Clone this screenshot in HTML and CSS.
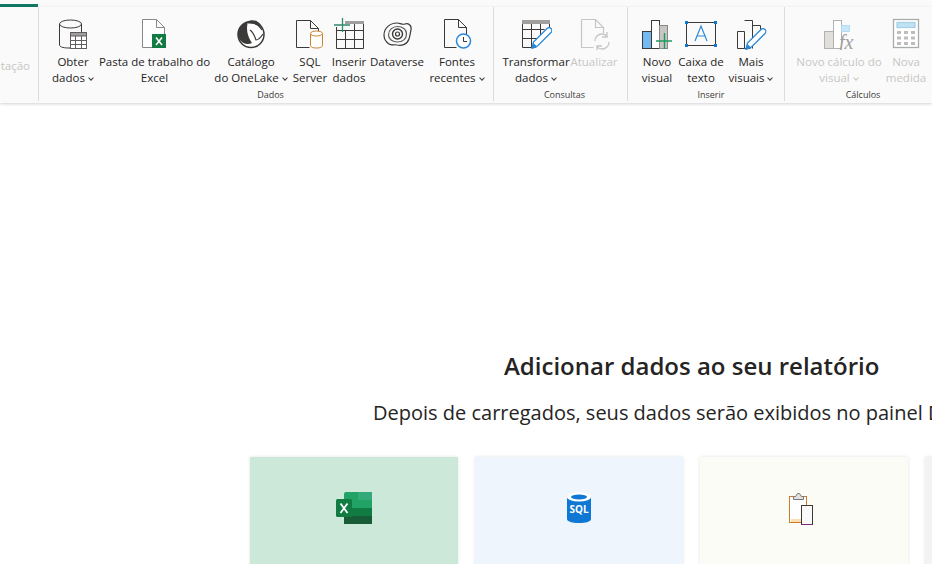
FILE: index.html
```html
<!DOCTYPE html>
<html>
<head>
    <meta charset="utf-8">
    <meta name="viewport" content="width=device-width, initial-scale=1">
    <title>Relatório</title>
    <link rel="stylesheet" href="styles.css">
</head>
<body>
    <div class="tabstrip"><span class="activetab"></span></div>
    <div class="ribbon">
        <div class="group g-cut">
            <div class="items"><div class="btn w-cut dim"><span class="ico"></span><span class="lbl">&nbsp;<br></span><span class="lbl2">tação</span></div></div>
        </div>
        <div class="group g-dados">
            <div class="items">
                <div class="btn w-obter">
                    <svg class="ico" width="32" height="32" viewBox="0 0 32 32" fill="none" stroke="#3b3a39" stroke-width="1"><path d="M2.5 6v21c0 1.5 2.500 3 9.500 3h3M24.500 6v8"/><ellipse cx="13.500" cy="6" rx="11" ry="4"/><rect x="13.500" y="14.500" width="16" height="16" fill="#fff" stroke="#605e5c"/><rect x="13.500" y="14.500" width="16" height="3.500" fill="#a19f9d" stroke="#605e5c"/><path d="M13.500 22.500h16M13.500 26.500h16M18.500 18v12M24.500 18v12" stroke="#605e5c"/></svg>
                    <span class="lbl">Obter<br>dados<i class="chev"></i></span>
                </div>
                <div class="btn w-pasta">
                    <svg class="ico" width="32" height="32" viewBox="0 0 32 32" fill="none" stroke="#8a8886"><path d="M3.500 1.500h14l8 8v20h-22zM17.500 1.500v8h8" fill="#fff"/><rect x="13" y="16" width="14" height="14" fill="#107c41" stroke="none"/><path d="M17 19.500l6 7.500M23 19.500l-6 7.500" stroke="#fff" stroke-width="1.600"/></svg>
                    <span class="lbl">Pasta de trabalho do<br>Excel</span>
                </div>
                <div class="btn w-cat">
                    <svg class="ico" width="32" height="32" viewBox="0 0 32 32" fill="none"><circle cx="16" cy="16.500" r="13" stroke="#3b3a39" stroke-width="1.500" fill="#fff"/><path d="M3 16c0-7 5-11 10-12-2 6-1 14 4 21-7 3-14-2-14-9z" fill="#3b3a39"/><path d="M11 5c2-3 8-4 12-1 2 1 3 3 4 5-5-3-11-4-16-4z" fill="#3b3a39"/><path d="M13 5c6-1 11 2 14 7M15 12c3 2 5 7 6 10 2 0 5-3 7-6" stroke="#3b3a39" stroke-width="1.200"/></svg>
                    <span class="lbl">Catálogo<br>do OneLake<i class="chev"></i></span>
                </div>
                <div class="btn w-sql">
                    <svg class="ico" width="32" height="32" viewBox="0 0 32 32" fill="none"><path d="M2.500 2.500h14l8 8v6M16.500 2.500v8h8M2.500 2.500v27h13" stroke="#3b3a39"/><path d="M16.500 16v11c0 2 2 3 6 3s6-1 6-3V16z" fill="#fff" stroke="#ca8233"/><ellipse cx="22.500" cy="15.500" rx="6" ry="2.500" fill="#fff" stroke="#ca8233"/></svg>
                    <span class="lbl">SQL<br>Server</span>
                </div>
                <div class="btn w-ins">
                    <svg class="ico" width="32" height="32" viewBox="0 0 32 32" fill="none" stroke="#3b3a39"><path d="M3.500 9v21.500h27v-27H14M3.500 12.500h27M3.500 21.500h27M12.500 12v18.500M21.500 3.500v27"/><rect x="12" y="3" width="19" height="3" fill="#a19f9d" stroke="none"/><path d="M9.500 0v14M1 7h16" stroke="#2e8b6a" stroke-width="1.300"/></svg>
                    <span class="lbl">Inserir<br>dados</span>
                </div>
                <div class="btn w-dv">
                    <svg class="ico" width="32" height="32" viewBox="0 0 32 32" fill="none" stroke="#3b3a39" stroke-width="1.200"><path d="M3 17c0-7 6-12 13-12 3 0 5 2 8 1 3-1 7 1 6 6-1 4-1 6-2 9-2 6-8 7-12 6-3-1-5 1-8-1-3-2-5-5-5-9z"/><path d="M7.500 17c0-5 4-8.500 9-8.500s9 3 9 7.500c0 5-4 8-9 8-5 0-9-3-9-7z" stroke="#605e5c"/><circle cx="16.500" cy="16" r="5" stroke-width="1.400"/><circle cx="16.500" cy="16" r="2"/></svg>
                    <span class="lbl">Dataverse<br>&nbsp;</span>
                </div>
                <div class="btn w-font">
                    <svg class="ico" width="32" height="32" viewBox="0 0 32 32" fill="none"><path d="M3.500 1.500h14l8 8v9M17.500 1.500v8h8M3.500 1.500v28h12" stroke="#3b3a39"/><circle cx="22.500" cy="23" r="7" fill="#fff" stroke="#2b88d8" stroke-width="1.500"/><path d="M22.500 19v4.500h3.500" stroke="#3b3a39"/></svg>
                    <span class="lbl">Fontes<br>recentes<i class="chev"></i></span>
                </div>
            </div>
            <div class="gname">Dados</div>
        </div>
        <div class="group g-cons">
            <div class="items">
                <div class="btn w-trans">
                    <svg class="ico" width="32" height="32" viewBox="0 0 32 32" fill="none" stroke="#3b3a39"><path d="M2.500 2.500h27v10M2.500 2.500v27h13"/><rect x="2" y="2" width="28" height="4" fill="#a19f9d" stroke="none"/><path d="M2.500 11.500h22M2.500 20.500h16M11.500 6v24M20.500 6v14"/><path d="M12 30l1.500-6L27 10.500c1-1 3-1 4 0s1 3 0 4L17.500 28z" fill="#fff" stroke="#2b88d8" stroke-width="1.300"/><path d="M12 31l1.500-6 4 4z" fill="#2b88d8" stroke="none"/></svg>
                    <span class="lbl">Transformar<br>dados<i class="chev"></i></span>
                </div>
                <div class="btn w-atu dim">
                    <svg class="ico" width="32" height="32" viewBox="0 0 32 32" fill="none" stroke="#c8c6c4"><path d="M3.500 1.500h14l8 8v6M17.500 1.500v8h8M3.500 1.500v28h12" stroke-width="1.200"/><path d="M17 23c0-4 3-7 7-7 2 0 4 1 5 2.500M31 24c0 4-3 7-7 7-2 0-4-1-5-2.500M29 14v5h-5M19 33v-5h5" stroke-width="1.300"/></svg>
                    <span class="lbl">Atualizar<br>&nbsp;</span>
                </div>
            </div>
            <div class="gname">Consultas</div>
        </div>
        <div class="group g-ins">
            <div class="items">
                <div class="btn w-novo">
                    <svg class="ico" width="32" height="32" viewBox="0 0 32 32" fill="none" stroke="#3b3a39"><rect x="1.500" y="13.500" width="9" height="17" fill="#74b9f0"/><rect x="10.500" y="2.500" width="8" height="28" fill="#fff"/><rect x="18.500" y="7.500" width="8" height="23" fill="#c8c6c4" stroke="#8a8886"/><path d="M23.500 15v16M15 23h16" stroke="#1f9a5f" stroke-width="1.400"/></svg>
                    <span class="lbl">Novo<br>visual</span>
                </div>
                <div class="btn w-caixa">
                    <svg class="ico" width="34" height="32" viewBox="0 0 34 32" fill="none"><rect x="2.500" y="4.500" width="29" height="23" stroke="#3b3a39"/><path d="M11 23l6-15 6 15M13 18h8" stroke="#2b88d8" stroke-width="1.200"/><path d="M1 3h3v3H1zM30 3h3v3h-3zM1 26h3v3H1zM30 26h3v3h-3z" fill="#0f78d4"/></svg>
                    <span class="lbl">Caixa de<br>texto</span>
                </div>
                <div class="btn w-mais">
                    <svg class="ico" width="32" height="32" viewBox="0 0 32 32" fill="none" stroke="#3b3a39"><path d="M2.500 13.500h7v17h-7zM9.500 2.500h8v28M17.500 7.500h8v9"/><path d="M9.500 30.500h6"/><path d="M11 31l1.500-6L26 11.500c1-1 3-1 4 0s1 3 0 4L16.500 29z" fill="#fff" stroke="#2b88d8" stroke-width="1.300"/><path d="M11 32l1.500-6 4 4z" fill="#2b88d8" stroke="none"/></svg>
                    <span class="lbl">Mais<br>visuais<i class="chev"></i></span>
                </div>
            </div>
            <div class="gname">Inserir</div>
        </div>
        <div class="group g-calc">
            <div class="items">
                <div class="btn w-calc dim">
                    <svg class="ico" width="32" height="32" viewBox="0 0 32 32" fill="none" stroke="#b3b0ad"><rect x="1.500" y="13.500" width="9" height="17" fill="#e1dfdd"/><rect x="10.500" y="2.500" width="8" height="28" fill="#fff"/><path d="M18.500 7.500h8v6h-8z" fill="#c7e6f7" stroke="#b3dcf2"/><text x="16" y="31" class="fx">fx</text></svg>
                    <span class="lbl">Novo cálculo do<br>visual<i class="chev"></i></span>
                </div>
                <div class="btn w-med dim">
                    <svg class="ico" width="28" height="32" viewBox="0 0 28 32" fill="none" stroke="#a8adac" stroke-width="1.300"><rect x="1.500" y="1.500" width="25" height="28" fill="#fff"/><rect x="5" y="4.500" width="18" height="5" fill="#bfe3f5" stroke="#a8cfe3"/><path d="M5 13h4v3H5zM12 13h4v3h-4zM19 13h4v3h-4zM5 18.500h4v3H5zM12 18.500h4v3h-4zM19 18.500h4v3h-4zM5 24h4v3H5zM12 24h4v3h-4zM19 24h4v3h-4z" fill="#bdbdbd" stroke="none"/></svg>
                    <span class="lbl">Nova<br>medida</span>
                </div>
                <div class="btn w-last dim"><span class="ico"></span><span class="lbl">M</span></div>
            </div>
            <div class="gname">Cálculos</div>
        </div>
    </div>
    <main class="canvas">
        <h1 class="title">Adicionar dados ao seu relatório</h1>
        <p class="sub">Depois de carregados, seus dados serão exibidos no painel Dados.</p>
        <div class="cards">
            <div class="card c-excel">
                <svg width="38" height="34" viewBox="0 0 38 34"><rect x="9" y="1" width="28" height="32" rx="2" fill="#21a366"/><rect x="23" y="1" width="14" height="8" fill="#33a97a"/><rect x="23" y="9" width="14" height="8" fill="#21a366"/><rect x="9" y="17" width="28" height="8" fill="#107c41"/><rect x="9" y="25" width="28" height="8" fill="#185c37"/><rect x="1" y="8" width="16" height="18" rx="1.500" fill="#107c41"/><path d="M5.500 12.500l7 9.500M12.500 12.500l-7 9.500" stroke="#fff" stroke-width="1.800"/></svg>
            </div>
            <div class="card c-sql">
                <svg width="26" height="32" viewBox="0 0 26 32"><path d="M1 5v22c0 2.500 5 4 12 4s12-1.500 12-4V5z" fill="#0f78d4"/><ellipse cx="13" cy="5" rx="12" ry="4.500" fill="#fff"/><ellipse cx="13" cy="5" rx="8" ry="2.500" fill="#0f78d4"/><text x="13" y="21" class="sqltxt">SQL</text></svg>
            </div>
            <div class="card c-paste">
                <svg width="34" height="36" viewBox="0 0 34 36" fill="none"><rect x="2.500" y="6.500" width="17" height="26" fill="#fff" stroke="#ca7a2c"/><rect x="4" y="29" width="15" height="3" fill="#fbdfb0"/><path d="M6.500 9.500h10v-3h-2l-2-3h-2l-2 3h-2z" fill="#dfe0df" stroke="#7a7a7a"/><rect x="14.500" y="15.500" width="11" height="19" fill="#fafafa" stroke="#3b3a39"/><path d="M14.500 34.500h11" stroke="#7a2c78"/></svg>
            </div>
            <div class="card c-more"></div>
        </div>
    </main>
</body>
</html>
```
FILE: styles.css
```css
* {
    margin: 0;
    padding: 0;
    box-sizing: border-box;
}
html, body {
    width: 932px;
    height: 564px;
    overflow: hidden;
    background: #fff;
}
body {
    font-family: "Open Sans", "Noto Sans", sans-serif;
    color: #252423;
}
.tabstrip {
    height: 7px;
    background: #fafafa;
}
.activetab {
    display: block;
    width: 38px;
    height: 3px;
    position: relative;
    top: 4px;
    background: #117865;
}
.ribbon {
    height: 96px;
    display: flex;
    background: #fafafa;
    box-shadow: 0 1px 3px rgba(0, 0, 0, .18);
    overflow: hidden;
    position: relative;
}
.group {
    display: flex;
    flex-direction: column;
    flex: none;
    height: 94px;
    border-right: 1px solid #dcdcdc;
    margin-top: 0;
    padding-top: 10px;
}
.items {
    display: flex;
    height: 72px;
    justify-content: flex-start;
}
.gname {
    font-size: 9px;
    line-height: 12px;
    text-align: center;
    margin-top: 1px;
    color: #3b3a39;
}
.btn {
    flex: none;
    display: flex;
    flex-direction: column;
    align-items: center;
    font-size: 11.500px;
    line-height: 16px;
    text-align: center;
    white-space: nowrap;
}
.ico {
    display: block;
    height: 32px;
    flex: none;
    margin-top: 1px;
}
.lbl {
    display: block;
    margin-top: 4px;
}
.lbl2 {
    display: block;
    margin-top: -12px;
    width: 100%;
    text-align: right;
}
.dim {
    color: #c8c6c4;
}
.chev {
    display: inline-block;
    width: 4px;
    height: 4px;
    margin: 0 1px 2px 4px;
    border-right: 1px solid #3b3a39;
    border-bottom: 1px solid #3b3a39;
    transform: rotate(45deg);
}
.dim .chev {
    border-color: #c8c6c4;
}
.fx {
    font-family: "Liberation Serif", serif;
    font-style: italic;
    font-size: 20px;
    fill: #a19f9d;
    stroke: none;
}

.g-cut { width: 39px; }
.w-cut { width: 30px; }
.g-dados { width: 455px; padding-left: 9px; }
.g-cons { width: 134px; padding-left: 8px; }
.g-ins { width: 157px; padding-left: 10px; }
.g-calc { width: 147px; border-right: 0; padding-left: 9px; }

.w-obter { width: 50px; }
.w-pasta { width: 113px; }
.w-cat { width: 80px; }
.w-sql { width: 34px; margin-left: 2px; }
.w-ins { width: 44px; }
.w-dv { width: 52px; }
.w-font { width: 68px; }
.w-trans { width: 64px; margin-left: 2px; }
.w-atu { width: 52px; }
.w-novo { width: 38px; }
.w-caixa { width: 50px; }
.w-mais { width: 50px; margin-left: 0; }
.w-calc { width: 90px; }
.w-med { width: 44px; }
.w-last { width: 20px; }

.canvas {
    display: flex;
    flex-direction: column;
    align-items: center;
    width: 900px;
    margin-left: 250px;
    align-items: flex-start;
}
.title {
    font-size: 24px;
    line-height: 32px;
    font-weight: 600;
    margin-top: 247px;
    margin-left: 254px;
    white-space: nowrap;
}
.sub {
    font-size: 20px;
    line-height: 28px;
    margin-top: 17px;
    margin-left: 123px;
    white-space: nowrap;
}
.cards {
    display: flex;
    gap: 17px;
    margin-top: 30px;
}
.card {
    width: 208px;
    height: 110px;
    flex: none;
    display: flex;
    align-items: center;
    justify-content: center;
    padding-bottom: 8px;
    box-shadow: 0 0 3px rgba(0, 0, 0, .12);
}
.sqltxt {
    font-family: "Open Sans", sans-serif;
    font-size: 10px;
    font-weight: 700;
    fill: #fff;
    text-anchor: middle;
}
.c-excel { background: #cce8d9; }
.c-sql { background: #eef5fc; }
.c-paste { background: #fcfcf7; }
.c-more { background: #f3f3f3; }
```
